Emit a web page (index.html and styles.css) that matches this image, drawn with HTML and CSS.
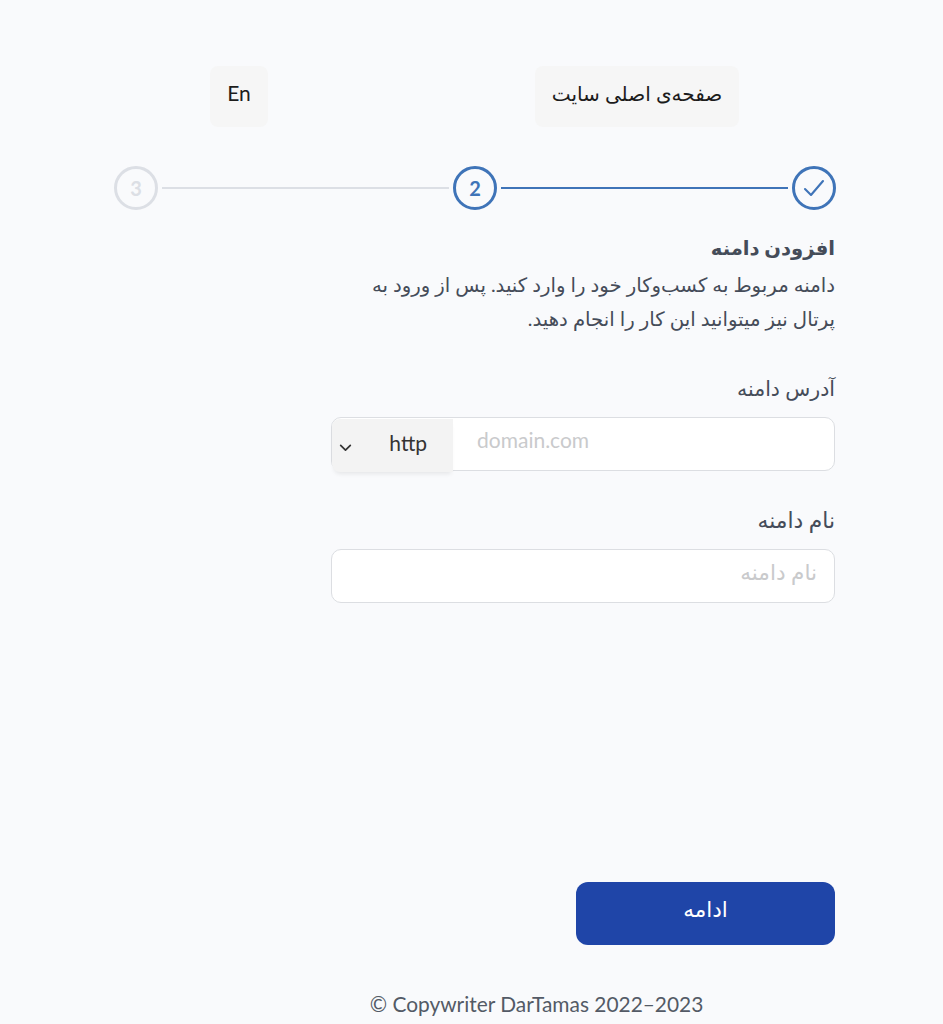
FILE: index.html
```html
<!DOCTYPE html>
<html lang="fa" dir="rtl">
<head>
  <meta charset="UTF-8" />
  <title>افزودن دامنه</title>
  <link rel="stylesheet" href="styles.css">
</head>
<body>

<div class="container">

  <!-- Top links -->
  <div class="top-bar">
    <a class="top-link home-link">صفحه‌ی اصلی سایت</a>
    <a class="top-link lang-link" dir="ltr">En</a>
  </div>

  <!-- Steps -->
  <div class="steps">
    <div class="step step-active">
      <svg width="24" height="24" viewBox="0 0 24 24" fill="none" stroke="#3f74b8" stroke-width="2.1" stroke-linecap="round" stroke-linejoin="round">
        <path d="M3 13l6 6L21 5" />
      </svg>
    </div>
    <div class="step-line step-line-active"></div>
    <div class="step step-active">2</div>
    <div class="step-line"></div>
    <div class="step step-off">3</div>
  </div>

  <!-- Form -->
  <div class="form-col">
    <h1>افزودن دامنه</h1>
    <p class="intro">دامنه مربوط به کسب‌وکار خود را وارد کنید. پس از ورود به<br>پرتال نیز میتوانید این کار را انجام دهید.</p>

    <label class="field-label label-address">آدرس دامنه</label>
    <div class="input-box address-box" dir="ltr">
      <div class="protocol">
        <svg width="15" height="15" viewBox="0 0 14 14" fill="none" stroke="#333" stroke-width="1.6" stroke-linecap="round" stroke-linejoin="round">
          <path d="M2.500 5l4.500 4.500L11.500 5" />
        </svg>
        <span>http</span>
      </div>
      <span class="placeholder-latin">domain.com</span>
    </div>

    <label class="field-label label-name">نام دامنه</label>
    <div class="input-box name-box">
      <span class="placeholder-fa">نام دامنه</span>
    </div>
  </div>

  <div class="actions">
    <button class="next-btn">ادامه</button>
  </div>

  <div class="copyright" dir="ltr">© Copywriter DarTamas 2022–2023</div>

</div>

</body>
</html>
```

FILE: styles.css
```css
html, body {
  height: 100%;
}

body {
  margin: 0;
  background: #f9fafc;
  font-family: Lato, "DejaVu Sans", sans-serif;
  color: #454c59;
  overflow: hidden;
}

.container {
  width: 943px;
  height: 1024px;
  padding-top: 66px;
  box-sizing: border-box;
}

.top-bar {
  display: flex;
  justify-content: space-between;
  margin-inline: 204px 210px;
}

.top-link {
  display: flex;
  justify-content: center;
  background: #f6f6f6;
  border-radius: 8px;
  color: #1c1c1c;
  height: 61px;
  box-sizing: border-box;
}

.home-link {
  width: 204px;
  padding-top: 15px;
  font-size: 20px;
}

.lang-link {
  width: 58px;
  padding-top: 14px;
  font-size: 21px;
}

.steps {
  display: flex;
  align-items: center;
  margin: 39px 107px 0 114px;
  gap: 4px;
}

.step {
  width: 44px;
  height: 44px;
  box-sizing: border-box;
  border-radius: 50%;
  border: 3px solid #3f74b8;
  color: #3f74b8;
  display: flex;
  align-items: center;
  justify-content: center;
  font-size: 20px;
  font-weight: 700;
  flex: none;
}

.step-off {
  border-color: #dcdfe5;
  color: #dcdfe5;
}

.step-line {
  flex: 1;
  height: 1.500px;
  background: #dcdfe5;
}

.step-line-active {
  background: #3f74b8;
}

.form-col {
  margin-inline: 108px 331px;
  margin-top: 24px;
}

h1 {
  margin: 0;
  font-size: 19.600px;
  line-height: 28px;
  font-weight: 700;
}

.intro {
  margin: 6px 0 0;
  font-size: 19.700px;
  line-height: 34px;
}

.field-label {
  display: block;
  font-size: 20.500px;
  line-height: 26px;
}

.label-address {
  margin-top: 39px;
}

.label-name {
  margin-top: 36px;
  font-size: 21.800px;
}

.input-box {
  margin-top: 16px;
  height: 54px;
  box-sizing: border-box;
  background: #fff;
  border: 1.500px solid #dcdee2;
  border-radius: 10px;
  display: flex;
  align-items: center;
}

.protocol {
  width: 121px;
  height: 53px;
  margin-top: 1px;
  align-self: flex-start;
  background: #f3f3f3;
  border-radius: 8px 0 0 8px;
  box-shadow: 0 4px 4px -2px rgba(0, 0, 0, 0.08);
  display: flex;
  align-items: center;
  justify-content: space-between;
  padding: 0 26px 6px 6px;
  box-sizing: border-box;
  font-size: 21px;
  color: #333;
}

.protocol svg {
  margin-top: 9px;
}

.placeholder-latin {
  margin-left: 24px;
  margin-top: -9px;
  font-size: 21px;
  color: #c9cacc;
}

.placeholder-fa {
  margin-right: 17px;
  padding-bottom: 8px;
  font-size: 21.600px;
  color: #c9cacc;
}

.actions {
  margin-top: 279px;
  margin-inline: 108px 576px;
}

.next-btn {
  display: block;
  width: 259px;
  height: 63px;
  background: #1f45a8;
  color: #fff;
  border: none;
  border-radius: 12px;
  font-family: inherit;
  font-size: 21.500px;
  padding-bottom: 10px;
}

.copyright {
  margin-top: 46px;
  margin-left: 130px;
  text-align: center;
  font-size: 20.900px;
  line-height: 26px;
  color: #535a66;
}
```
